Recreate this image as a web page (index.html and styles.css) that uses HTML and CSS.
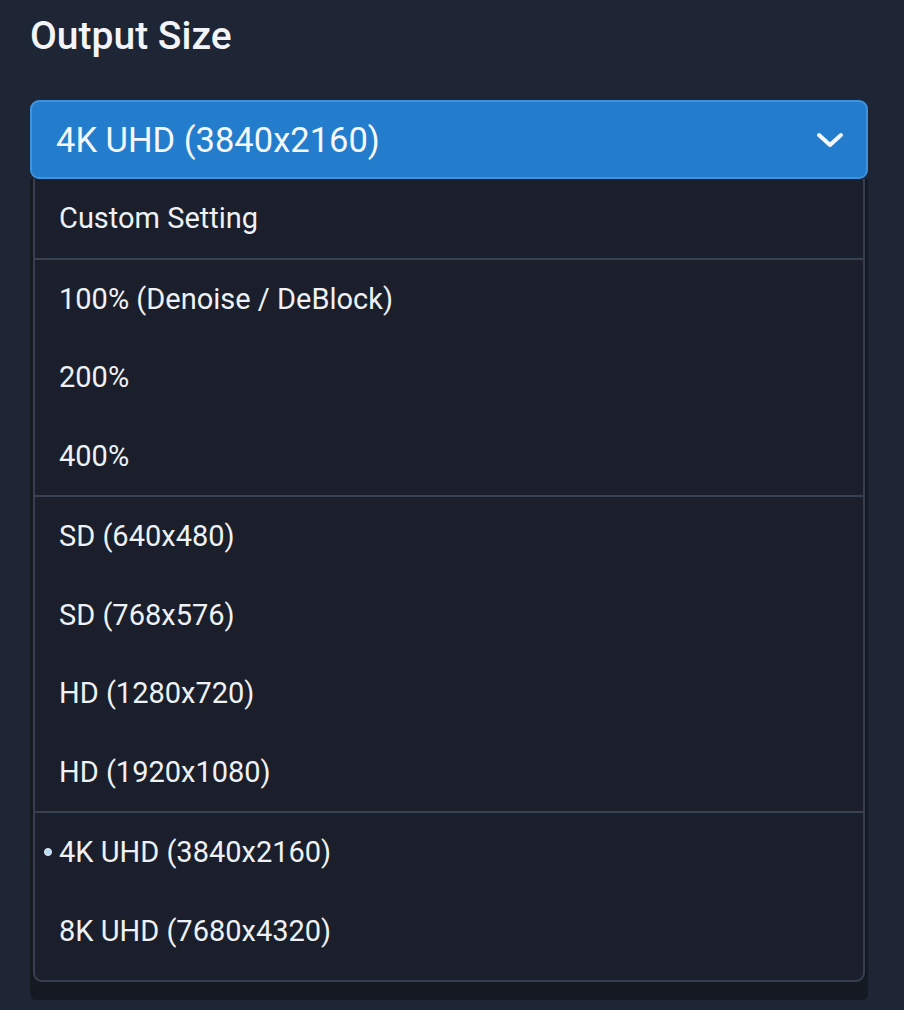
FILE: index.html
```html
<!DOCTYPE html>
<html lang="en">
  <head>
    <meta charset="UTF-8" />
    <meta name="viewport" content="width=device-width, initial-scale=1.0" />
    <title>Output Size</title>
    <link rel="stylesheet" href="styles.css">
  </head>
  <body>
    <div class="panel">
      <h2 class="title">Output Size</h2>

      <div class="select">
        <span class="select-value">4K UHD (3840x2160)</span>
        <svg class="chevron" width="28" height="16" viewBox="0 0 28 16">
          <path d="M3 3 L14 13 L25 3" fill="none" stroke="#f4f8fc" stroke-width="4" stroke-linecap="round" stroke-linejoin="round" />
        </svg>
      </div>

      <div class="menu-wrap">
        <div class="menu">
          <div class="group">
            <div class="option">Custom Setting</div>
          </div>
          <div class="group">
            <div class="option">100% (Denoise / DeBlock)</div>
            <div class="option">200%</div>
            <div class="option">400%</div>
          </div>
          <div class="group">
            <div class="option">SD (640x480)</div>
            <div class="option">SD (768x576)</div>
            <div class="option">HD (1280x720)</div>
            <div class="option">HD (1920x1080)</div>
          </div>
          <div class="group last">
            <div class="option selected">4K UHD (3840x2160)</div>
            <div class="option">8K UHD (7680x4320)</div>
          </div>
        </div>
      </div>
    </div>
  </body>
</html>
```

FILE: styles.css
```css
body {
  font-family: Roboto, "Liberation Sans", sans-serif;
  background-color: #1e2535;
  color: #eef1f5;
  margin: 0;
  padding: 0;
}

.panel {
  padding: 0 36px 0 30px;
}

.title {
  margin: 0;
  padding-top: 14px;
  height: 100px;
  box-sizing: border-box;
  font-size: 39px;
  font-weight: 500;
  line-height: 44px;
  color: #f2f4f7;
}

.select {
  display: flex;
  align-items: center;
  justify-content: space-between;
  height: 79px;
  padding: 0 22px 0 24px;
  background-color: #237dcc;
  border: 2px solid #3d93e0;
  border-radius: 9px;
  box-sizing: border-box;
}

.select-value {
  font-size: 34.5px;
  color: #f4f7fb;
}

.chevron {
  display: block;
}

.menu-wrap {
  padding: 0 3px 18px;
  background-color: #151922;
  border-radius: 0 0 6px 6px;
}

.menu {
  background-color: #1a1f2b;
  border: 2px solid #373f4f;
  border-top: none;
  border-radius: 0 0 9px 9px;
}

.group {
  border-bottom: 2px solid #384151;
}

.group.last {
  border-bottom: none;
  padding-bottom: 10px;
}

.option {
  position: relative;
  display: flex;
  align-items: center;
  height: 78.5px;
  padding-left: 24px;
  font-size: 29px;
  color: #eef1f5;
}

.option.selected::before {
  content: "";
  position: absolute;
  left: 9px;
  top: 50%;
  width: 6px;
  height: 6px;
  margin-top: -4px;
  border-radius: 50%;
  background-color: #b7dcf2;
  border: 1.5px solid #e6f3fb;
}
```
